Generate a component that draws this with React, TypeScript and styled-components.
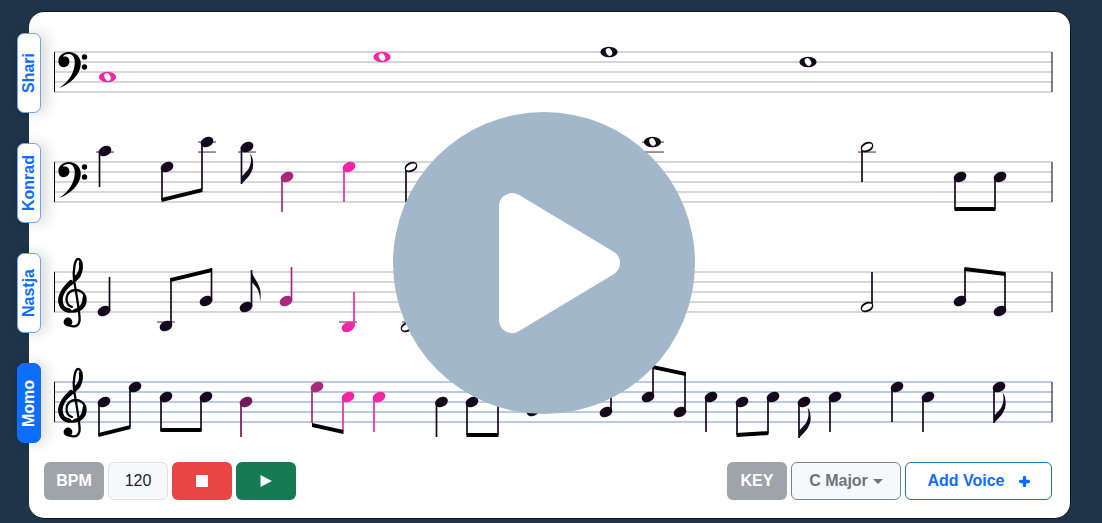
import styled, { createGlobalStyle } from "styled-components";
import { FaPlus } from "react-icons/fa";

const INK = "#16081c";
const PLUM = "#6e1a5c";
const BERRY = "#a8287c";
const PINK = "#f526a6";

const GlobalStyle = createGlobalStyle`
	html, body {
		margin: 0;
		height: 523px;
		overflow: hidden;
		background-color: #1f3349;
		font-family: "Liberation Sans", Arial, sans-serif;
	}
`;

const Card = styled.div`
	position: relative;
	box-sizing: border-box;
	display: flex;
	flex-direction: column;
	width: 1043px;
	height: 508px;
	margin: 11px 0 0 28px;
	padding: 10px 18px 18px 15px;
	background-color: white;
	border: 1px solid #0b1420;
	border-left-color: #1f3349;
	border-radius: 16px;
`;

const Row = styled.div`
	display: flex;
	align-items: flex-start;
	height: 110px;
	margin-left: -27px;
`;

const Tab = styled.div<{ $active?: boolean }>`
	box-sizing: border-box;
	flex: none;
	display: flex;
	align-items: center;
	justify-content: center;
	width: 24px;
	height: 80px;
	margin: 11px 3px 0 0;
	font-size: 16px;
	font-weight: bold;
	writing-mode: vertical-rl;
	transform: rotate(180deg);
	color: ${(p) => (p.$active ? "white" : "#0d6efd")};
	background-color: ${(p) => (p.$active ? "#0d6efd" : "white")};
	border: 1.5px solid ${(p) => (p.$active ? "#0d6efd" : "#73a5e4")};
	border-radius: 7px;
	box-shadow: -6px 0 14px rgba(0, 0, 0, 0.14);
`;

const Score = styled.svg`
	display: block;
	flex: none;
	overflow: visible;
`;

const Controls = styled.div`
	display: flex;
	justify-content: space-between;
	height: 38px;
`;

const Group = styled.div`
	display: flex;
	gap: 4px;
`;

const Badge = styled.div`
	display: flex;
	align-items: center;
	justify-content: center;
	width: 60px;
	font-size: 16px;
	font-weight: bold;
	color: white;
	background-color: #9fa4a9;
	border-radius: 6px;
`;

const BpmInput = styled.div`
	box-sizing: border-box;
	display: flex;
	align-items: center;
	justify-content: center;
	width: 60px;
	font-size: 16px;
	color: #212529;
	background-color: #f6f8fa;
	border: 1px solid #dee2e6;
	border-radius: 6px;
`;

const TransportButton = styled.button<{ $color: string }>`
	display: flex;
	align-items: center;
	justify-content: center;
	width: 60px;
	padding: 0;
	border: none;
	border-radius: 6px;
	background-color: ${(p) => p.$color};
`;

const KeySelect = styled.div`
	box-sizing: border-box;
	display: flex;
	align-items: center;
	justify-content: center;
	gap: 5px;
	width: 110px;
	font-size: 16px;
	font-weight: bold;
	color: #6c757d;
	background-color: #f6f9fc;
	border: 1px solid #7c838a;
	border-radius: 6px;
`;

const Caret = styled.span`
	width: 0;
	height: 0;
	border-top: 5px solid #6c757d;
	border-left: 5px solid transparent;
	border-right: 5px solid transparent;
`;

const AddVoice = styled.button`
	box-sizing: border-box;
	display: flex;
	align-items: center;
	justify-content: center;
	gap: 14px;
	width: 147px;
	padding: 0;
	font-family: inherit;
	font-size: 16px;
	font-weight: bold;
	color: #0d6efd;
	background-color: white;
	border: 1px solid #1577b8;
	border-radius: 6px;

	svg {
		stroke: currentColor;
		stroke-width: 60;
	}
`;

const BigPlay = styled.div`
	position: absolute;
	left: 364px;
	top: 100px;
	display: flex;
	align-items: center;
	justify-content: center;
	width: 302px;
	height: 302px;
	background-color: #a3b7ca;
	border-radius: 50%;
`;

type Note = {
	x: number;
	y: number;
	stemX?: number;
	stemEnd?: number;
	color?: string;
	kind?: "half" | "whole";
	flag?: boolean;
};

type Beam = { x1: number; y1: number; x2: number; y2: number };
type Ledger = { x: number; y: number; w?: number };

type Voice = {
	name: string;
	top: number;
	clef: "bass" | "treble";
	active?: boolean;
	notes: Note[];
	beams: Beam[];
	ledgers: Ledger[];
};

const voices: Voice[] = [
	{
		name: "Shari",
		top: 52,
		clef: "bass",
		notes: [
			{ x: 107.5, y: 77, kind: "whole", color: PINK },
			{ x: 382, y: 57, kind: "whole", color: PINK },
			{ x: 609, y: 52, kind: "whole" },
			{ x: 808, y: 62, kind: "whole" },
		],
		beams: [],
		ledgers: [],
	},
	{
		name: "Konrad",
		top: 162,
		clef: "bass",
		notes: [
			{ x: 105, y: 151, stemX: 99.5, stemEnd: 187 },
			{ x: 167, y: 167, stemX: 162, stemEnd: 200 },
			{ x: 207, y: 142, stemX: 202, stemEnd: 189 },
			{ x: 247, y: 147, stemX: 241.5, stemEnd: 184, flag: true },
			{ x: 287, y: 177, stemX: 282, stemEnd: 212, color: BERRY },
			{ x: 349, y: 167, stemX: 344, stemEnd: 202, color: PINK },
			{ x: 411, y: 167, stemX: 406, stemEnd: 202, kind: "half" },
			{ x: 652.5, y: 142, kind: "whole" },
			{ x: 867, y: 147, stemX: 862, stemEnd: 182, kind: "half" },
			{ x: 960, y: 177, stemX: 955, stemEnd: 209 },
			{ x: 1000, y: 177, stemX: 995, stemEnd: 209 },
		],
		beams: [
			{ x1: 161.5, y1: 198, x2: 202.5, y2: 188 },
			{ x1: 954.5, y1: 207, x2: 995.5, y2: 207 },
		],
		ledgers: [
			{ x: 96, y: 152 },
			{ x: 198, y: 142 },
			{ x: 198, y: 152 },
			{ x: 238, y: 152 },
			{ x: 642, y: 152, w: 22 },
			{ x: 642, y: 142, w: 22 },
			{ x: 858, y: 152 },
		],
	},
	{
		name: "Nastja",
		top: 272,
		clef: "treble",
		notes: [
			{ x: 104, y: 311, stemX: 109.5, stemEnd: 277 },
			{ x: 166, y: 326, stemX: 171, stemEnd: 278 },
			{ x: 206, y: 301, stemX: 211.5, stemEnd: 268 },
			{ x: 246, y: 307, stemX: 251.5, stemEnd: 270, flag: true },
			{ x: 286, y: 301, stemX: 291.5, stemEnd: 267, color: BERRY },
			{ x: 348, y: 327, stemX: 354, stemEnd: 292, color: PINK },
			{ x: 407, y: 327, stemX: 412, stemEnd: 292, kind: "half" },
			{ x: 867, y: 307, stemX: 872, stemEnd: 272, kind: "half" },
			{ x: 960, y: 301, stemX: 965, stemEnd: 268 },
			{ x: 1000, y: 311, stemX: 1005, stemEnd: 273 },
		],
		beams: [
			{ x1: 170.5, y1: 278, x2: 212, y2: 268 },
			{ x1: 964.5, y1: 267, x2: 1005.5, y2: 272 },
		],
		ledgers: [
			{ x: 157, y: 322 },
			{ x: 339, y: 322 },
			{ x: 402, y: 322 },
		],
	},
	{
		name: "Momo",
		top: 382,
		clef: "treble",
		active: true,
		notes: [
			{ x: 104, y: 402, stemX: 99, stemEnd: 436, color: INK },
			{ x: 135, y: 387, stemX: 130, stemEnd: 427 },
			{ x: 166, y: 397, stemX: 161, stemEnd: 431 },
			{ x: 206, y: 397, stemX: 201, stemEnd: 431 },
			{ x: 246, y: 402, stemX: 241, stemEnd: 437, color: PLUM },
			{ x: 317, y: 387, stemX: 312, stemEnd: 423, color: BERRY },
			{ x: 348, y: 397, stemX: 343, stemEnd: 431, color: PINK },
			{ x: 379, y: 397, stemX: 374, stemEnd: 432, color: PINK },
			{ x: 441.5, y: 402, stemX: 436.5, stemEnd: 437 },
			{ x: 472, y: 402, stemX: 467, stemEnd: 435 },
			{ x: 503, y: 397, stemX: 498, stemEnd: 435 },
			{ x: 533, y: 411 },
			{ x: 606, y: 412, stemX: 611, stemEnd: 380 },
			{ x: 648, y: 397, stemX: 653, stemEnd: 366 },
			{ x: 680, y: 412, stemX: 685, stemEnd: 372 },
			{ x: 711, y: 397, stemX: 706, stemEnd: 432 },
			{ x: 742, y: 402, stemX: 737, stemEnd: 435 },
			{ x: 773, y: 397, stemX: 768, stemEnd: 433 },
			{ x: 804, y: 402, stemX: 799, stemEnd: 438, flag: true },
			{ x: 835, y: 397, stemX: 830, stemEnd: 432 },
			{ x: 897, y: 387, stemX: 892, stemEnd: 422 },
			{ x: 928, y: 397, stemX: 923, stemEnd: 432 },
			{ x: 999, y: 387, stemX: 994, stemEnd: 423, flag: true },
		],
		beams: [
			{ x1: 98.5, y1: 433, x2: 130.5, y2: 425 },
			{ x1: 160.5, y1: 428, x2: 201.5, y2: 428 },
			{ x1: 312, y1: 423, x2: 343.5, y2: 430 },
			{ x1: 466.5, y1: 433, x2: 498.5, y2: 433 },
			{ x1: 652.5, y1: 365, x2: 685.5, y2: 372 },
			{ x1: 736.5, y1: 433, x2: 768.5, y2: 431 },
		],
		ledgers: [],
	},
];

const BassClef = () => (
	<g fill="#000">
		<path d="M59.5 36 C68 30 75 21 74.8 10 C74.6 4.5 72 2 68.5 2 C65.5 2 63.6 3 62.8 5 C66.5 3.6 69.4 6 69.4 9.5 C69.4 13 66.6 15.2 63.6 15.2 C60.4 15.2 58.4 12.5 58.4 9 C58.4 3.5 63.5 0 68.5 0 C76 0 81 5 80.8 12 C80.5 23 70 32 59.5 36 Z" />
		<circle cx="84.5" cy="5" r="2.7" />
		<circle cx="84.5" cy="15" r="2.7" />
	</g>
);

const TrebleClef = () => (
	<g fill="none" stroke="#000" strokeLinecap="round">
		<path
			strokeWidth="2.3"
			d="M67 50 C68 55 78 57 79.5 49 C80.5 43 75 15 74 8 C73 -2 75 -13 78 -13 C82 -13 83 -3 80 3 C76 11 59 18 59.5 28 C59.5 36 66 39.5 72 39.5 C80 39.5 85.5 35 85.5 28 C85.5 21 80 18 76 18 C70 18 66.5 22 66.5 27 C66.5 31 69 34 72 35"
		/>
		<path strokeWidth="4.4" d="M71 10 C65 16 60.5 21 60.5 28 C60.5 34 64 38 69 38.5" />
		<path strokeWidth="3.4" d="M80.5 -9 C81.5 -4 80 2 75 6" />
		<path strokeWidth="3.6" d="M84.5 25 C84.5 33 80 38 75 38.5" />
		<circle cx="68" cy="50" r="4.4" fill="#000" stroke="none" />
	</g>
);

const NoteHead = ({ x, y, kind, color }: Note) => {
	if (kind === "whole") {
		return (
			<g>
				<ellipse cx={x} cy={y} rx="8.6" ry="5.3" fill={color} />
				<ellipse cx={x} cy={y} rx="2.9" ry="4" fill="white" transform={`rotate(-30 ${x} ${y})`} />
			</g>
		);
	}
	return (
		<g transform={`rotate(-27 ${x} ${y})`}>
			<ellipse cx={x} cy={y} rx="6.7" ry="4.9" fill={color} />
			{kind === "half" && <ellipse cx={x} cy={y} rx="5.5" ry="2.9" fill="white" />}
		</g>
	);
};

const Flag = ({ x, y, up, color }: { x: number; y: number; up: boolean; color: string }) => (
	<path
		fill={color}
		d={
			up
				? `M${x} ${y} C${x + 1} ${y + 10} ${x + 12} ${y + 13} ${x + 8.5} ${y + 32} C${x + 9} ${y + 20} ${x + 4} ${y + 16} ${x} ${y + 12} Z`
				: `M${x} ${y} C${x + 5} ${y - 5} ${x + 13} ${y - 12} ${x + 11.5} ${y - 22} C${x + 11.5} ${y - 26} ${x + 10} ${y - 29} ${x + 8.5} ${y - 30} C${x + 10} ${y - 26} ${x + 10} ${y - 20} ${x + 7} ${y - 15} C${x + 5} ${y - 12} ${x + 2} ${y - 10} ${x} ${y - 7} Z`
		}
	/>
);

const Staff = ({ voice }: { voice: Voice }) => {
	const { top, notes, beams, ledgers, clef, active } = voice;
	const lineColor = active ? "#a3b8da" : "#c8c8c8";

	return (
		<Score width="1010" height="110" viewBox={`44 ${top - 30} 1010 110`}>
			{[0, 10, 20, 30, 40].map((offset) => (
				<line key={offset} x1="54" x2="1052" y1={top + offset} y2={top + offset} stroke={lineColor} strokeWidth="1.7" />
			))}
			<rect x="54" y={top} width="1" height="40" fill="#000" />
			<rect x="1051.5" y={top} width="1" height="40" fill="#000" />
			<g transform={`translate(0 ${top})`}>{clef === "bass" ? <BassClef /> : <TrebleClef />}</g>
			{ledgers.map((l) => (
				<rect key={`${l.x}-${l.y}`} x={l.x} y={l.y - 0.7} width={l.w ?? 18} height="1.5" fill="#777" />
			))}
			{notes.map((note) => {
				const color = note.color ?? INK;
				return (
					<g key={note.x}>
						{note.stemX !== undefined && note.stemEnd !== undefined && (
							<line x1={note.stemX} x2={note.stemX} y1={note.y} y2={note.stemEnd} stroke={color} strokeWidth="1.7" />
						)}
						{note.flag && <Flag x={note.stemX ?? 0} y={note.stemEnd ?? 0} up={note.stemEnd! < note.y} color={color} />}
						<NoteHead {...note} color={color} />
					</g>
				);
			})}
			{beams.map((b) => (
				<polygon
					key={b.x1}
					fill="#000"
					points={`${b.x1},${b.y1} ${b.x2},${b.y2} ${b.x2},${b.y2 + 4} ${b.x1},${b.y1 + 4}`}
				/>
			))}
		</Score>
	);
};

const App = () => {
	return (
		<>
			<GlobalStyle />
			<Card>
				{voices.map((voice) => (
					<Row key={voice.name}>
						<Tab $active={voice.active}>{voice.name}</Tab>
						<Staff voice={voice} />
					</Row>
				))}
				<Controls>
					<Group>
						<Badge>BPM</Badge>
						<BpmInput>120</BpmInput>
						<TransportButton $color="#ea4444">
							<svg width="12" height="12" viewBox="0 0 12 12">
								<rect width="12" height="12" fill="white" />
							</svg>
						</TransportButton>
						<TransportButton $color="#157a55">
							<svg width="12" height="12" viewBox="0 0 12 12">
								<path d="M0.5 0 L12 6 L0.5 12 Z" fill="white" />
							</svg>
						</TransportButton>
					</Group>
					<Group>
						<Badge>KEY</Badge>
						<KeySelect>
							C Major
							<Caret />
						</KeySelect>
						<AddVoice>
							Add Voice
							<FaPlus size={11} />
						</AddVoice>
					</Group>
				</Controls>
				<BigPlay>
					<svg width="302" height="302" viewBox="393 112 302 302">
						<path
							d="M512 206 L607 263 L512 320 Z"
							fill="white"
							stroke="white"
							strokeWidth="26"
							strokeLinejoin="round"
						/>
					</svg>
				</BigPlay>
			</Card>
		</>
	);
};

export default App;
